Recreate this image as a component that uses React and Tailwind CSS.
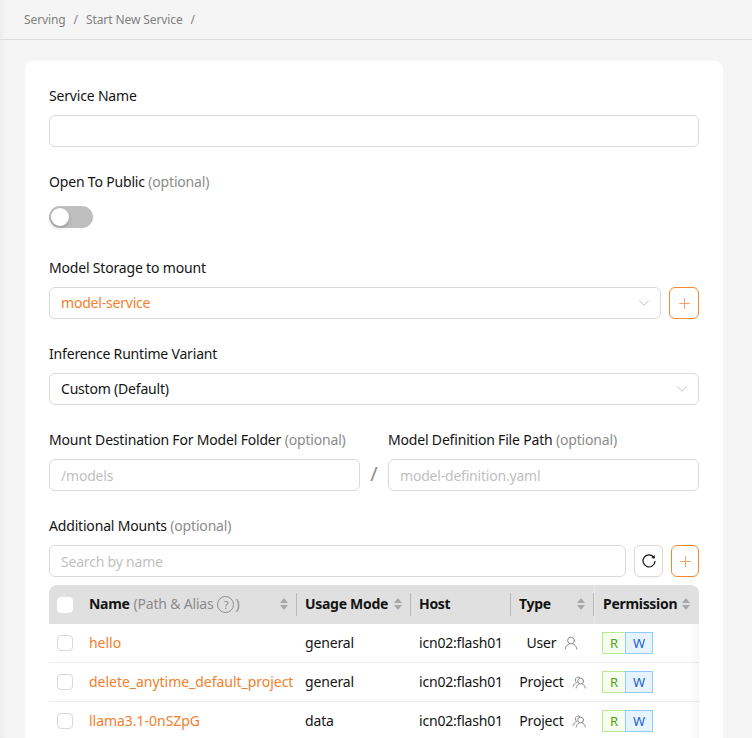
import { useState } from 'react';
import { ChevronDown, Plus } from 'lucide-react';

const ROWS = [
  { name: 'hello', mode: 'general', type: 'User' },
  { name: 'delete_anytime_default_project', mode: 'general', type: 'Project' },
  { name: 'llama3.1-0nSZpG', mode: 'data', type: 'Project' },
];

const COLS = 'grid grid-cols-[32px_216px_114px_100px_83px_105px]';
const inputCls = 'w-full h-8 px-[11px] border border-[#d9d9d9] rounded-md text-sm tracking-[-0.2px] bg-white placeholder:text-[#bfbfbf] outline-none';

function Label({ children, optional }) {
  return (
    <div className="h-[22px] mb-2 text-sm leading-[22px] text-[#141414] tracking-[-0.18px]">
      {children}
      {optional && <span className="text-[#8c8c8c]"> (optional)</span>}
    </div>
  );
}

function Select({ value, orange }) {
  return (
    <div className="flex-1 h-8 pl-[11px] pr-[7px] border border-[#d9d9d9] rounded-md flex items-center justify-between text-sm tracking-[-0.2px]">
      <span className={orange ? 'text-[#f2802c]' : 'text-[#141414]'}>{value}</span>
      <ChevronDown size={18} strokeWidth={1.2} className="text-[#bcbcbc]" />
    </div>
  );
}

function AddButton({ width = 'w-[30px]' }) {
  return (
    <button className={`${width} h-8 shrink-0 border border-[#f08a32] rounded-md flex items-center justify-center`}>
      <Plus size={17} strokeWidth={1.5} className="text-[#f5a469]" />
    </button>
  );
}

function Sorter() {
  return (
    <span className="flex flex-col gap-[2px] shrink-0">
      <span className="w-0 h-0 border-x-[4px] border-x-transparent border-b-[5px] border-b-[#a8a8a8]" />
      <span className="w-0 h-0 border-x-[4px] border-x-transparent border-t-[5px] border-t-[#a8a8a8]" />
    </span>
  );
}

function Check({ head }) {
  return <span className={`block w-4 h-4 rounded border bg-white ${head ? 'border-white' : 'border-[#d9d9d9]'}`} />;
}

function HeadCell({ className, children, sep = true }) {
  return (
    <div className={`relative flex items-center justify-between h-full pl-2 pr-[9px] pb-px font-bold tracking-[-0.3px] ${className}`}>
      {children}
      {sep && <span className="absolute right-0 top-[8px] bottom-[8px] w-px bg-[#b8b8b8]" />}
    </div>
  );
}

function ReloadIcon() {
  return (
    <svg width="16" height="16" viewBox="0 0 16 16" fill="none" className="text-[#141414]">
      <path d="M13 4.6A6 6 0 1 0 14 8.4" stroke="currentColor" strokeWidth="1.2" strokeLinecap="round" />
      <path d="M13.8 1.9L13.6 5.4L10.4 5Z" fill="currentColor" />
    </svg>
  );
}

function UserIcon() {
  return (
    <svg width="14" height="14" viewBox="0 0 14 14" fill="none" stroke="#8c8c8c" strokeWidth="1" strokeLinecap="round">
      <circle cx="7" cy="4.5" r="3.4" />
      <path d="M1.2 13C1.6 10 3.4 8.4 5 8M12.8 13C12.4 10 10.6 8.4 9 8" />
    </svg>
  );
}

function ProjectIcon() {
  return (
    <svg width="14" height="14" viewBox="0 0 14 14" fill="none" stroke="#8c8c8c" strokeWidth="1" strokeLinecap="round">
      <circle cx="8.6" cy="6" r="2.9" />
      <path d="M4.2 13C4.5 10.9 5.6 9.6 7 9.2M13.3 13C13 10.9 11.9 9.6 10.5 9.2" />
      <path d="M7.8 2.4A2.9 2.9 0 0 0 3.4 5C3.4 6.1 4 7 4.8 7.5C3.1 8 1.6 9.4 1 11.4" />
    </svg>
  );
}

export default function App() {
  const [isPublic, setIsPublic] = useState(false);

  return (
    <div className="h-[738px] overflow-hidden bg-[#f5f5f5] shadow-[inset_7px_0_6px_-5px_rgba(0,0,0,0.05)] text-sm text-[#141414] font-['Noto_Sans',sans-serif]">
      <div className="h-10 pl-6 border-b border-[#dcdcdc] flex items-center gap-2 text-xs text-[#808080] tracking-[-0.1px]">
        <span>Serving</span>
        <span>/</span>
        <span>Start New Service</span>
        <span>/</span>
      </div>

      <div className="mt-[21px] ml-[25px] mr-[29px] bg-white rounded-lg pt-6 px-6 pb-6">
        <Label>Service Name</Label>
        <input className={inputCls} />

        <div className="mt-6">
          <Label optional>Open To Public</Label>
          <div className="h-8 flex items-center">
            <button
              onClick={() => setIsPublic(!isPublic)}
              className="w-11 h-[22px] rounded-full bg-[#bfbfbf] p-[2px] flex"
            >
              <span className="block w-[18px] h-[18px] rounded-full bg-white shadow-[0_2px_4px_rgba(0,35,11,0.2)]" />
            </button>
          </div>
        </div>

        <div className="mt-6">
          <Label>Model Storage to mount</Label>
          <div className="flex gap-2">
            <Select value="model-service" orange />
            <AddButton />
          </div>
        </div>

        <div className="mt-6">
          <Label>Inference Runtime Variant</Label>
          <Select value="Custom (Default)" />
        </div>

        <div className="mt-6 flex">
          <div className="w-[311px]">
            <Label optional>Mount Destination For Model Folder</Label>
            <input className={inputCls} placeholder="/models" />
          </div>
          <div className="w-[28px] flex items-end justify-center pb-[3px] text-xl text-[#8c8c8c]">/</div>
          <div className="flex-1">
            <Label optional>Model Definition File Path</Label>
            <input className={inputCls} placeholder="model-definition.yaml" />
          </div>
        </div>

        <div className="mt-6">
          <Label optional>Additional Mounts</Label>
          <div className="flex">
            <input className={`${inputCls} flex-1`} placeholder="Search by name" />
            <button className="ml-2 w-[29px] h-8 shrink-0 border border-[#d9d9d9] rounded-md flex items-center justify-center shadow-[0_2px_0_rgba(0,0,0,0.02)]">
              <ReloadIcon />
            </button>
            <div className="ml-2 shrink-0 flex"><AddButton width="w-[28px]" /></div>
          </div>

          <div className="relative mt-2">
            <div className={`${COLS} h-[39px] items-center bg-[#e0e0e0] rounded-t-lg overflow-hidden`}>
              <div className="pl-2"><Check head /></div>
              <HeadCell>
                <span className="flex items-center whitespace-nowrap">
                  Name
                  <span className="ml-1 font-normal text-[#8c8c8c] flex items-center tracking-[-0.2px]">
                    (Path &amp; Alias
                    <span className="mr-[1px] ml-[4px] w-[17px] h-[17px] rounded-full border border-[#8c8c8c] text-[11px] leading-[15px] text-center">?</span>
                    )
                  </span>
                </span>
                <Sorter />
              </HeadCell>
              <HeadCell><span>Usage Mode</span><Sorter /></HeadCell>
              <HeadCell><span>Host</span></HeadCell>
              <HeadCell><span>Type</span><Sorter /></HeadCell>
              <HeadCell sep={false} className="border-l border-[#e8e8e8]"><span>Permission</span><Sorter /></HeadCell>
            </div>
            {ROWS.map(row => (
              <div key={row.name} className={`${COLS} h-[39px] items-center border-b border-[#ececec]`}>
                <div className="pl-2"><Check /></div>
                <div className="pl-2 text-[#f2802c] whitespace-nowrap tracking-[-0.03px]">{row.name}</div>
                <div className="pl-2 tracking-[-0.15px]">{row.mode}</div>
                <div className="pl-2 tracking-[-0.2px]">icn02:flash01</div>
                <div className="pl-2 flex items-center justify-center gap-2 pr-2 tracking-[-0.2px]">
                  {row.type}
                  {row.type === 'User' ? <UserIcon /> : <ProjectIcon />}
                </div>
                <div className="pl-[8px] flex text-[13px] leading-[20px]">
                  <span className="w-6 h-[22px] text-center border border-[#b7eb8f] bg-[#f6ffed] text-[#52a31c]">R</span>
                  <span className="w-[28px] h-[22px] -ml-px text-center border border-[#91caff] bg-[#e6f4ff] text-[#1d5fd6]">W</span>
                </div>
              </div>
            ))}
            <div className="absolute right-0 top-[39px] bottom-0 w-[10px] bg-gradient-to-l from-[#00000008] to-transparent" />
          </div>
        </div>
      </div>
    </div>
  );
}
